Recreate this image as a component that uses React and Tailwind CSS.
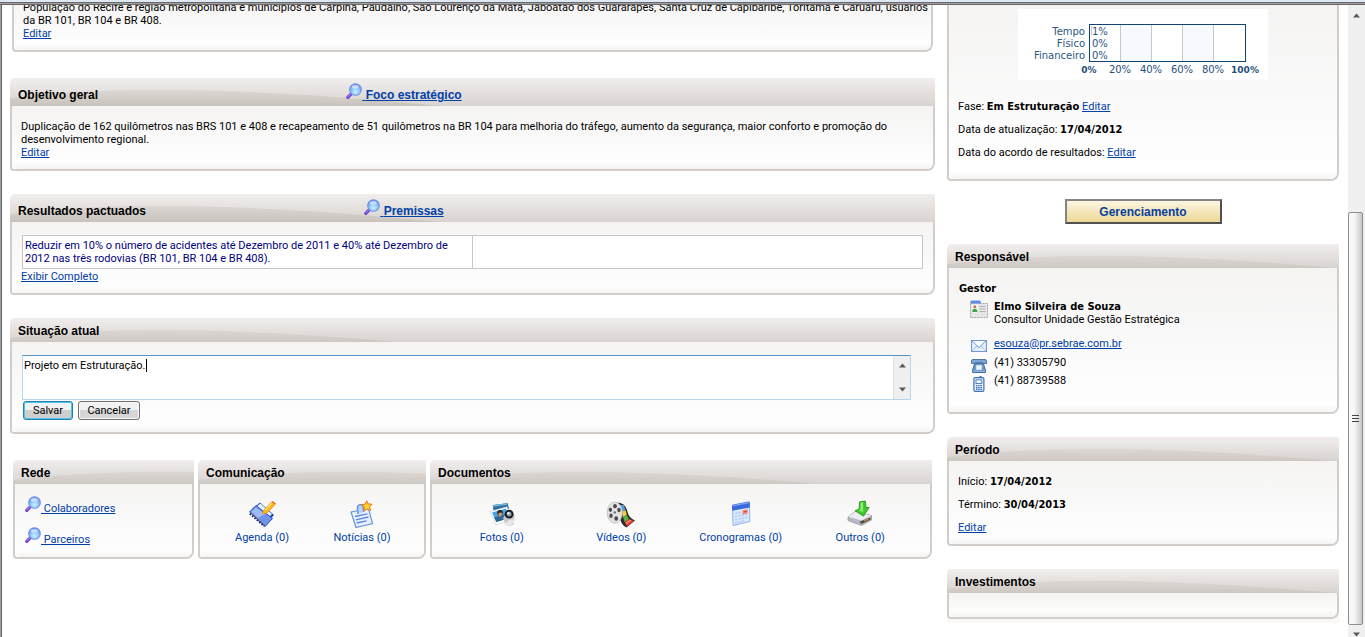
import { useState } from "react";

const linkClass = "text-[#0040a8] underline";
const headingFont = "font-[Liberation_Sans,Arial,sans-serif] text-[12px] leading-4 font-bold";

const Magnifier = () => (
  <svg width="16" height="17" viewBox="0 0 16 17" className="-mt-1 inline-block align-[-1px]" aria-hidden="true">
    <defs>
      <radialGradient id="lens" cx="50%" cy="70%" r="70%">
        <stop offset="0" stopColor="#c9f0ff" />
        <stop offset="0.55" stopColor="#8fc0fb" />
        <stop offset="1" stopColor="#4f7fe8" />
      </radialGradient>
    </defs>
    <path d="M5.5 10.5 L1.8 14.4" stroke="#6a3fd0" strokeWidth="3.2" strokeLinecap="round" />
    <path d="M5 10.6 L1.8 14" stroke="#b99cf2" strokeWidth="1" strokeLinecap="round" />
    <circle cx="9.5" cy="6.5" r="5.8" fill="url(#lens)" stroke="#6f93e4" strokeWidth="1.1" />
    <ellipse cx="9.2" cy="3.8" rx="3.6" ry="1.8" fill="#ffffff" opacity="0.55" />
  </svg>
);

const AgendaIcon = () => (
  <svg width="28" height="28" viewBox="0 0 28 28" aria-hidden="true">
    <path d="M4 9 L12 2.5 L26 15 L20 22 Z" fill="#2347b8" />
    <path d="M6 8.5 L12.5 3.5 L24 14 L18 20 Z" fill="#e9f2ff" />
    <path d="M1.5 12 L8 5.5 L24.5 18.5 L17 26.5 Z" fill="#6e93ea" stroke="#2a4fc0" strokeWidth="1" />
    <path d="M3.5 11.5 L8 7.3 L17 14.3 L10 18 Z" fill="#a9c4f8" opacity="0.8" />
    <path d="M2 13.5 L16.5 26" stroke="#26306e" strokeWidth="2.6" strokeDasharray="1.6 1.5" />
    <path d="M3 12.6 L17 24.6" stroke="#e3b850" strokeWidth="0.9" strokeDasharray="1.2 1.9" />
    <path d="M15.5 10.5 L23.5 2 L27 4.6 L19 13 L14.5 14 Z" fill="#ffb21c" stroke="#e69312" strokeWidth="0.7" />
    <path d="M17 10.6 L24 3.3" stroke="#ffe26a" strokeWidth="1.3" />
    <path d="M23.5 2 L24.8 0.9 L28 3.4 L27 4.6 Z" fill="#e8761a" />
  </svg>
);

const NewsIcon = () => (
  <svg width="28" height="28" viewBox="0 0 28 28" aria-hidden="true">
    <path d="M3 12 L20.5 8.5 L24.5 23.5 L8 27.5 Z" fill="#e6f0ff" stroke="#6a93de" strokeWidth="1.2" />
    <path d="M10 14 L9.4 7.5 Q9.6 4.6 12.5 4.6 Q15 4.6 15.2 7 L15.6 12" fill="#b8d3fb" stroke="#5f8ee0" strokeWidth="1.3" />
    <path d="M7 16.5 L19.5 13.8 M7.8 19.8 L20.6 17 M8.7 23 L18.5 20.8" stroke="#5f86d8" strokeWidth="1.3" />
    <path
      d="M18.6 0.8 L20.3 4 L24 4.2 L21.5 6.9 L22.6 10.5 L19.1 9.1 L15.8 11 L16.2 7.3 L13.5 4.8 L17.2 4.1 Z"
      fill="#ffcf2e"
      stroke="#e0781a"
      strokeWidth="1"
    />
  </svg>
);

const PhotosIcon = () => (
  <svg width="28" height="28" viewBox="0 0 28 28" aria-hidden="true">
    <path d="M4 4.5 L20 2.5 L21.5 9 L5.5 14 Z" fill="#2f6f9f" stroke="#ffffff" strokeWidth="1" />
    <path d="M5 6 L19 4" stroke="#7bb8dc" strokeWidth="1.3" />
    <path d="M2 11.5 L19 6.8 L23.5 20 L8 25 Z" fill="#ffffff" stroke="#c8ccd2" strokeWidth="0.6" />
    <path d="M4 12.5 L18 8.6 L21.2 18 L8.4 22 Z" fill="#4aa3dc" />
    <path d="M6 17.5 L19.8 13.4 L21.2 18 L8.4 22 Z" fill="#2f6298" />
    <circle cx="12" cy="12.8" r="2.8" fill="#26221f" />
    <path d="M10.2 13.4 Q12.5 12 14.2 13 L13.6 16.3 L11.2 16.6 Z" fill="#d8975e" />
    <path d="M15 18 L19 12.500 L26.5 15 L26 24.5 Q21 27 17.500 24.8 Z" fill="#c9c9cc" />
    <path d="M16 24.5 Q20 19 26 19.5 L25.6 24 Q21 26.6 16 24.5" fill="#e8e8ea" />
    <circle cx="21.2" cy="14.2" r="4.4" fill="#1d1f24" />
    <circle cx="21.2" cy="14.2" r="2.4" fill="#8c98a6" />
    <circle cx="20.4" cy="13.2" r="1.2" fill="#ffffff" />
  </svg>
);

const VideosIcon = () => (
  <svg width="30" height="28" viewBox="0 0 30 28" aria-hidden="true">
    <path d="M12 2.500 Q19.500 3 21.500 12 Q23 18 29 20.5 L20.5 27.500 Q14 24 14 17 Z" fill="#2b2b2b" />
    <path d="M14.500 5 L17.600 5 L19.600 10 L16 11.5 Z" fill="#4a9de0" />
    <path d="M16 11.5 L19.600 10.2 L20.800 15 L17 17 Z" fill="#f5cf3a" />
    <path d="M17 17 L20.800 15.2 L23 19 L18.6 22 Z" fill="#58b346" />
    <path d="M18.6 22 L23 19 L28 21 L20.8 26.4 Z" fill="#e0452f" />
    <path d="M20 23.200 L24.600 20" stroke="#f49a84" strokeWidth="1.2" />
    <ellipse cx="8.8" cy="12.6" rx="7.6" ry="10.6" fill="#e2e2e3" stroke="#b3b3b6" strokeWidth="0.7" />
    <ellipse cx="9" cy="6.2" rx="1.9" ry="2.1" fill="#4b4b4e" />
    <ellipse cx="4.4" cy="9.800" rx="1.7" ry="2.1" fill="#4b4b4e" />
    <ellipse cx="13" cy="10" rx="1.7" ry="2.2" fill="#4b4b4e" />
    <ellipse cx="5" cy="15.800" rx="1.700" ry="2.200" fill="#4b4b4e" />
    <ellipse cx="10.200" cy="18.5" rx="1.900" ry="2.200" fill="#4b4b4e" />
    <circle cx="8.8" cy="12.4" r="1.2" fill="#6a6a6e" />
  </svg>
);

const ScheduleIcon = () => (
  <svg width="28" height="28" viewBox="0 0 28 28" aria-hidden="true">
    <path d="M5.5 6 L22.5 2.5 L22.8 21.5 L6 25.5 Z" fill="#d9e8fd" stroke="#8fb2ec" strokeWidth="1" />
    <path d="M5 5.8 Q5 4.6 6.2 4.4 L21.5 1.6 Q22.8 1.5 22.8 2.8 L22.8 7.4 L5.2 10.8 Z" fill="#3a67dc" />
    <path d="M6 5.6 L21.8 2.6" stroke="#86a8f3" strokeWidth="1.2" />
    <path d="M8 13.4 L14 12.3 M8 16.6 L21 14 M8 19.8 L21 17.2 M8 22.8 L18 20.6" stroke="#b3cbf4" strokeWidth="1.4" strokeDasharray="2.4 1" />
    <path d="M15.5 10.2 L20.8 9.2 L20.8 13.6 L15.5 14.6 Z" fill="#f28b83" />
    <path d="M16.6 12 L19.8 11.4" stroke="#d83a30" strokeWidth="1.2" />
  </svg>
);

const OthersIcon = () => (
  <svg width="28" height="28" viewBox="0 0 28 28" aria-hidden="true">
    <path d="M2 17 L9 11.5 L25.5 15.5 L25.5 20 L15.5 25.5 L2 20.5 Z" fill="#b9b9c2" stroke="#8d8d98" strokeWidth="0.7" />
    <path d="M2.2 16.8 L9 11.7 L25.2 15.6 L15.5 20.6 Z" fill="#ececf1" />
    <path d="M13.5 21.8 L24.5 17.5 L24.5 19.6 L15.4 24 Z" fill="#54493c" />
    <path d="M18 21 L22.5 19" stroke="#d89a4a" strokeWidth="1" />
    <path d="M13.6 1.8 L19.4 1 L20 7.4 L23.2 7.6 L17.4 16.2 L9 10.6 L13 9.4 Z" fill="#3cc92d" stroke="#1f8f1a" strokeWidth="0.8" />
    <path d="M14.6 2.8 L17 2.5 L17.2 12 L12.5 10.6 L14.4 9.6 Z" fill="#8cec72" />
  </svg>
);

const CardIcon = () => (
  <svg width="18" height="18" viewBox="0 0 18 18" aria-hidden="true">
    <path d="M0.5 4 V1.4 Q0.5 0.4 1.5 0.4 H9.5 L11 2 V4 Z" fill="#5b8df2" />
    <rect x="0.5" y="3.5" width="17" height="14" fill="#e6e6e6" stroke="#9a9a9a" strokeWidth="0.9" strokeDasharray="2 1" />
    <rect x="2" y="4.6" width="6" height="8" fill="#f6f9f4" />
    <circle cx="4.8" cy="6.7" r="1.5" fill="#c0765a" />
    <path d="M2.3 12 Q2.3 8.7 4.8 8.7 Q7.4 8.7 7.4 12 Z" fill="#3fa347" />
    <path d="M9.5 6.5 H15.5 M9.5 9 H15.5 M9.5 11.5 H15.5" stroke="#b3b3b3" strokeWidth="1" />
  </svg>
);

const MailIcon = () => (
  <svg width="16" height="12" viewBox="0 0 16 12" aria-hidden="true">
    <rect x="0.5" y="0.5" width="15" height="11" fill="#e3eefb" stroke="#6f97cd" />
    <path d="M1 11 L6 5.8 M15 11 L10 5.8" stroke="#a3c0e6" strokeWidth="1" />
    <path d="M1 1 L8 7.6 L15 1" fill="#f7fbff" stroke="#6f97cd" strokeWidth="1" />
  </svg>
);

const PhoneIcon = () => (
  <svg width="16" height="14" viewBox="0 0 16 14" aria-hidden="true">
    <path d="M0.5 4.500 V2 Q0.600 0.6 2 0.5 H14 Q15.400 0.6 15.5 2 V4.500 H11.6 V3.4 H4.4 V4.500 Z" fill="#7fa8d8" stroke="#3f6c9f" strokeWidth="0.9" />
    <path d="M3.600 4.6 H12.400 L14.4 11 V13.5 H1.6 V11 Z" fill="#6e98ca" stroke="#3a6598" strokeWidth="0.9" />
    <rect x="5.2" y="6.2" width="5.600" height="4.6" fill="#eaf3fc" />
    <path d="M2 12.2 H14" stroke="#a8c8ea" strokeWidth="0.8" />
  </svg>
);

const MobileIcon = () => (
  <svg width="16" height="16" viewBox="0 0 16 16" aria-hidden="true">
    <rect x="2.9" y="1.6" width="10" height="13.8" rx="1.4" fill="#e6f0fc" stroke="#3e71b8" strokeWidth="1.2" />
    <rect x="8.6" y="0" width="2" height="2" fill="#3e71b8" />
    <rect x="5" y="3.8" width="5.8" height="3.6" fill="#ffffff" stroke="#3e71b8" strokeWidth="0.9" />
    <path d="M5 9.6 H11 M5 11.6 H11 M5 13.4 H11" stroke="#3e71b8" strokeWidth="1.2" strokeDasharray="1.5 0.7" />
  </svg>
);

const HeaderWave = () => (
  <svg width="430" height="28" viewBox="0 0 430 28" className="absolute left-0 top-0" aria-hidden="true">
    <defs>
      <linearGradient id="wave" x1="0" y1="0" x2="0" y2="1">
        <stop offset="0" stopColor="#dcd7d3" />
        <stop offset="1" stopColor="#c9c3bd" />
      </linearGradient>
    </defs>
    <path d="M0 28 V20 C60 13 120 11 180 12 C270 14 350 20 430 28 Z" fill="url(#wave)" />
  </svg>
);

const PanelBody = ({ className = "", children }) => (
  <div className="flex grow flex-col rounded-bl-[4px] rounded-br-[8px] border-x-2 border-b-2 border-[#d3cdca] bg-linear-to-b from-[#f5f4f3] to-white">
    <div className={`grow ${className}`}>{children}</div>
    <div className="h-2 shrink-0 rounded-b-md bg-linear-to-b from-white to-[#f5f4f3]" />
  </div>
);

const Panel = ({ title, action, tall, className = "", bodyClassName, children }) => (
  <section className={`flex flex-col ${className}`}>
    <header
      className={`relative flex shrink-0 items-center overflow-hidden rounded-tl-[5px] bg-linear-to-b from-[#f1eeed] to-[#d8d3d0] pl-2 ${
        tall ? "h-7 pt-[6px]" : "h-6 pt-[2px]"
      }`}
    >
      <HeaderWave />
      <h2 className={`relative w-[212px] ${headingFont}`}>{title}</h2>
      {action && (
        <div className={`relative w-[348px] text-center ${headingFont}`}>
          <a href="#" className={linkClass}>
            <Magnifier /> {action}
          </a>
        </div>
      )}
    </header>
    <PanelBody className={bodyClassName}>{children}</PanelBody>
  </section>
);

const Strong = ({ children }) => <b className="font-[DejaVu_Sans_Condensed,Tahoma,sans-serif]">{children}</b>;

const IconLink = ({ icon, label }) => (
  <a href="#" className="flex flex-1 flex-col items-center gap-[3px] whitespace-nowrap text-[#0040a8]">
    {icon}
    {label}
  </a>
);

const ProgressChart = () => (
  <svg width="250" height="71" viewBox="0 0 250 71" className="mx-auto block bg-white font-[DejaVu_Sans,Verdana,sans-serif]" role="img">
    <rect x="102.5" y="15.5" width="31" height="37" fill="#f6f9fe" />
    <rect x="164.5" y="15.5" width="31" height="37" fill="#f6f9fe" />
    <path d="M102.5 16 V52 M133.5 16 V52 M164.5 16 V52 M195.5 16 V52" stroke="#c8c8c8" />
    <rect x="71.5" y="15.5" width="156" height="37" fill="none" stroke="#0f4470" />
    <path d="M73.5 17 V26" stroke="#c8c8c8" />
    <g fontSize="10" fill="#2b5782">
      <text x="67" y="26" textAnchor="end">Tempo</text>
      <text x="67" y="38" textAnchor="end">Físico</text>
      <text x="67" y="50" textAnchor="end">Financeiro</text>
      <text x="74" y="26">1%</text>
      <text x="74" y="38">0%</text>
      <text x="74" y="50">0%</text>
    </g>
    <g fontSize="10" fill="#1f4f7c" textAnchor="middle">
      <text x="71" y="64" fontSize="9" fontWeight="bold">0%</text>
      <text x="102" y="64">20%</text>
      <text x="133" y="64">40%</text>
      <text x="164" y="64">60%</text>
      <text x="195" y="64">80%</text>
      <text x="227" y="64" fontSize="9" fontWeight="bold">100%</text>
    </g>
  </svg>
);

const Arrow = ({ down }) => (
  <svg width="7" height="5" viewBox="0 0 7 5" aria-hidden="true">
    <path d={down ? "M0 0.5 H7 L3.5 4.5 Z" : "M0 4.5 H7 L3.5 0.5 Z"} fill="#5a5a5a" />
  </svg>
);

const Scrollbar = () => (
  <div className="flex w-[17px] shrink-0 flex-col items-center bg-[#f0f0f0] pt-2">
    <Arrow />
    <div className="mt-[194px] flex min-h-0 w-[15px] grow items-center justify-center self-start rounded-[2px] border border-[#8e8e92] bg-linear-to-r from-[#f7f7f7] from-40% to-[#c8c8cc]">
      <div className="flex flex-col gap-[2px]">
        <span className="h-px w-[7px] bg-[#444]" />
        <span className="h-px w-[7px] bg-[#444]" />
        <span className="h-px w-[7px] bg-[#444]" />
      </div>
    </div>
    <div className="flex h-3 shrink-0 items-end overflow-hidden">
      <Arrow down />
    </div>
  </div>
);

const StatusForm = () => {
  const [status, setStatus] = useState("Projeto em Estruturação.");

  return (
    <form onSubmit={(e) => e.preventDefault()}>
      <div className="relative mr-[13px] ml-px flex h-[45px] border border-[#b9d7ec] border-t-[#5794bf] bg-white">
        <textarea
          aria-label="Situação atual"
          value={status}
          onChange={(e) => setStatus(e.target.value)}
          className="block flex-1 resize-none overflow-hidden px-px py-[3px] leading-[13px] outline-none"
        />
        <span className="absolute top-[3px] left-[123px] h-[13px] w-px bg-black" />
        <div className="flex w-[17px] flex-col items-center justify-between border-l border-[#e2e2e2] bg-[#f0f0f0] py-[7px]">
          <Arrow />
          <Arrow down />
        </div>
      </div>
      <div className="mt-px ml-[2px] flex gap-[5px]">
        <button
          type="submit"
          className="h-[19px] w-[50px] rounded-[3px] border border-[#2c7da8] bg-linear-to-b from-[#f2f2f2] from-50% to-[#cfcfcf] to-50% leading-[15px] inset-ring inset-ring-[#46c8f0]"
        >
          Salvar
        </button>
        <button
          type="button"
          className="h-[19px] w-[62px] rounded-[3px] border border-[#707070] bg-linear-to-b from-[#f2f2f2] from-50% to-[#d6d6d6] to-50% leading-[15px] inset-ring inset-ring-[#f8f8f8]"
        >
          Cancelar
        </button>
      </div>
    </form>
  );
};

const MainColumn = () => (
  <main className="min-w-0 flex-1">
    <section className="mx-[2px] -mt-1">
      <PanelBody className="px-[9px] pb-[2px] whitespace-nowrap">
        <p>
          População do Recife e região metropolitana e municípios de Carpina, Paudalho, São Lourenço da Mata, Jaboatão dos
          Guararapes, Santa Cruz de Capibaribe, Toritama e Caruaru, usuários
          <br />
          da BR 101, BR 104 e BR 408.
        </p>
        <a href="#" className={linkClass}>Editar</a>
      </PanelBody>
    </section>

    <Panel title="Objetivo geral" action="Foco estratégico" tall className="mt-[26px]" bodyClassName="px-[9px] pt-[14px] pb-[2px]">
      <p>
        Duplicação de 162 quilômetros nas BRS 101 e 408 e recapeamento de 51 quilômetros na BR 104 para melhoria do tráfego,
        aumento da segurança, maior conforto e promoção do desenvolvimento regional.
      </p>
      <a href="#" className={linkClass}>Editar</a>
    </Panel>

    <Panel title="Resultados pactuados" action="Premissas" tall className="mt-[23px]" bodyClassName="px-[9px] pt-[13px] pb-[2px]">
      <div className="px-px">
        <table className="w-full table-fixed border-collapse bg-white text-[#000080]">
          <tbody>
            <tr>
              <td className="border border-[#c6c6c6] px-[2px] py-[3px]">
                Reduzir em 10% o número de acidentes até Dezembro de 2011 e 40% até Dezembro de 2012 nas três rodovias (BR
                101, BR 104 e BR 408).
              </td>
              <td className="border border-[#c6c6c6]" />
            </tr>
          </tbody>
        </table>
      </div>
      <a href="#" className={`${linkClass} mt-px block w-fit`}>Exibir Completo</a>
    </Panel>

    <Panel title="Situação atual" className="mt-[23px]" bodyClassName="px-[9px] pt-[13px] pb-1">
      <StatusForm />
    </Panel>

    <div className="mx-[3px] mt-[26px] flex h-[99px] gap-1">
      <Panel title="Rede" className="w-[181px] shrink-0 overflow-hidden" bodyClassName="flex flex-col gap-[14px] px-[10px] pt-4">
        <a href="#" className={`${linkClass} block leading-[17px]`}>
          <Magnifier /> Colaboradores
        </a>
        <a href="#" className={`${linkClass} block leading-[17px]`}>
          <Magnifier /> Parceiros
        </a>
      </Panel>
      <Panel title="Comunicação" className="w-[228px] shrink-0 overflow-hidden" bodyClassName="flex px-3 pt-4">
        <IconLink icon={<AgendaIcon />} label="Agenda (0)" />
        <IconLink icon={<NewsIcon />} label="Notícias (0)" />
      </Panel>
      <Panel title="Documentos" className="min-w-0 flex-1" bodyClassName="flex px-[10px] pt-4">
        <IconLink icon={<PhotosIcon />} label="Fotos (0)" />
        <IconLink icon={<VideosIcon />} label="Vídeos (0)" />
        <IconLink icon={<ScheduleIcon />} label="Cronogramas (0)" />
        <IconLink icon={<OthersIcon />} label="Outros (0)" />
      </Panel>
    </div>
  </main>
);

const Sidebar = () => (
  <aside className="w-[392px] shrink-0">
    <PanelBody className="px-[9px] pt-1 pb-3">
      <ProgressChart />
      <div className="mt-5 flex flex-col gap-[10px]">
        <p>
          Fase: <Strong>Em Estruturação</Strong> <a href="#" className={linkClass}>Editar</a>
        </p>
        <p>
          Data de atualização: <Strong>17/04/2012</Strong>
        </p>
        <p>
          Data do acordo de resultados: <a href="#" className={linkClass}>Editar</a>
        </p>
      </div>
    </PanelBody>

    <button
      type="button"
      className={`mx-auto mt-[18px] block h-[25px] w-[157px] border-2 border-t-[#858585] border-r-[#505050] border-b-[#505050] border-l-[#858585] bg-linear-to-b from-[#fcf5e2] to-[#ecd894] text-[#0a3f9c] ${headingFont}`}
    >
      Gerenciamento
    </button>

    <Panel title="Responsável" className="mt-5" bodyClassName="px-[10px] pt-[14px] pb-[17px]">
      <h3><Strong>Gestor</Strong></h3>
      <ul className="mt-[5px] pl-[11px]">
        <li className="flex gap-[6px]">
          <CardIcon />
          <div>
            <Strong>Elmo Silveira de Souza</Strong>
            <p>Consultor Unidade Gestão Estratégica</p>
          </div>
        </li>
        <li className="mt-[11px] flex gap-[7px] pl-px">
          <div className="pt-[3px]"><MailIcon /></div>
          <a href="mailto:esouza@pr.sebrae.com.br" className={linkClass}>esouza@pr.sebrae.com.br</a>
        </li>
        <li className="mt-1 flex h-[13px] gap-[7px] pl-px">
          <div className="pt-[3px]"><PhoneIcon /></div>
          (41) 33305790
        </li>
        <li className="mt-[5px] flex h-[13px] gap-[7px] pl-px">
          <div className="pt-[2px]"><MobileIcon /></div>
          (41) 88739588
        </li>
      </ul>
    </Panel>

    <Panel title="Período" className="mt-[23px]" bodyClassName="flex flex-col gap-[10px] px-[9px] pt-[14px] pb-[2px]">
      <p>
        Início: <Strong>17/04/2012</Strong>
      </p>
      <p>
        Término: <Strong>30/04/2013</Strong>
      </p>
      <a href="#" className={`${linkClass} w-fit`}>Editar</a>
    </Panel>

    <div className="mt-[23px] bg-[#faf8f6] pb-1">
      <Panel title="Investimentos" bodyClassName="h-4" />
    </div>
  </aside>
);

export default function App() {
  return (
    <div className="flex h-screen flex-col overflow-hidden bg-white font-[Roboto,Tahoma,sans-serif] text-[11px] leading-[13px] text-black">
      <div className="h-[2px] shrink-0 bg-[#dfe9f5]" />
      <div className="h-[3px] shrink-0 border-y border-[#686868] bg-[#a0a0a0]" />
      <div className="flex min-h-0 flex-1">
        <div className="w-[2px] shrink-0 border-r border-[#646464] bg-[#a0a0a0]" />
        <div className="flex min-w-0 flex-1 items-start gap-3 overflow-hidden pr-[9px] pl-2">
          <MainColumn />
          <Sidebar />
        </div>
        <Scrollbar />
      </div>
    </div>
  );
}
